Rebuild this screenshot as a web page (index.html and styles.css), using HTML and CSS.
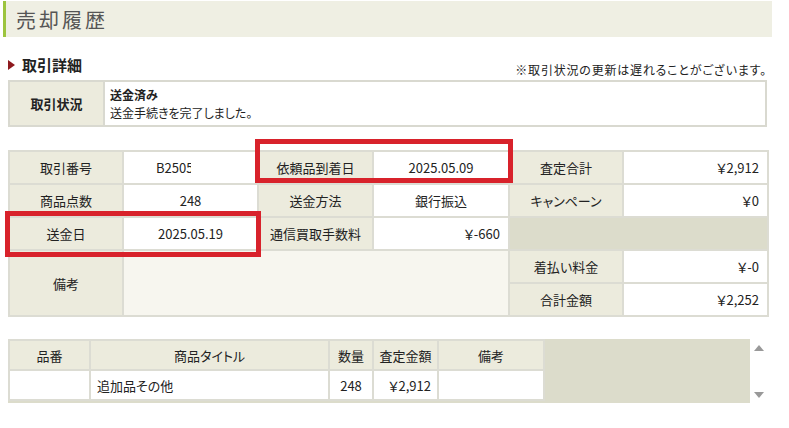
FILE: index.html
```html
<!DOCTYPE html>
<html lang="ja">

<head>
    <meta charset="UTF-8">
    <meta name="viewport" content="width=device-width, initial-scale=1.0">
    <title>売却履歴</title>
    <link rel="stylesheet" href="styles.css">
</head>

<body>
    <div class="page-title">
        <h1>売却履歴</h1>
    </div>

    <div class="main">
        <div class="detail-head">
            <h2 class="section-header"><span class="mark"></span>取引詳細</h2>
            <p class="note">※取引状況の更新は遅れることがございます。</p>
        </div>

        <!-- Status -->
        <table class="status-table">
            <tr>
                <th>取引状況</th>
                <td>
                    <div class="status-main">送金済み</div>
                    <div class="status-sub">送金手続きを完了しました。</div>
                </td>
            </tr>
        </table>

        <!-- Detail -->
        <div class="detail-wrap">
            <table class="detail-table">
                <colgroup>
                    <col style="width: 114px">
                    <col style="width: 135px">
                    <col style="width: 115px">
                    <col style="width: 136px">
                    <col style="width: 114px">
                    <col style="width: 145px">
                </colgroup>
                <tr>
                    <th>取引番号</th>
                    <td><span class="masked">B25059</span></td>
                    <th>依頼品到着日</th>
                    <td>2025.05.09</td>
                    <th>査定合計</th>
                    <td class="num">￥2,912</td>
                </tr>
                <tr>
                    <th>商品点数</th>
                    <td>248</td>
                    <th>送金方法</th>
                    <td>銀行振込</td>
                    <th>キャンペーン</th>
                    <td class="num">￥0</td>
                </tr>
                <tr>
                    <th>送金日</th>
                    <td>2025.05.19</td>
                    <th>通信買取手数料</th>
                    <td class="num">￥-660</td>
                    <td class="blank" colspan="2"></td>
                </tr>
                <tr>
                    <th rowspan="2">備考</th>
                    <td class="memo" colspan="3" rowspan="2"></td>
                    <th>着払い料金</th>
                    <td class="num">￥-0</td>
                </tr>
                <tr>
                    <th>合計金額</th>
                    <td class="num">￥2,252</td>
                </tr>
            </table>
            <div class="highlight highlight-arrival"></div>
            <div class="highlight highlight-sent"></div>
        </div>

        <!-- Items -->
        <div class="items-box">
            <div class="items-scroll">
                <table class="items-table">
                    <colgroup>
                        <col style="width: 81px">
                        <col style="width: 239px">
                        <col style="width: 44px">
                        <col style="width: 65px">
                        <col style="width: 106px">
                    </colgroup>
                    <tr>
                        <th>品番</th>
                        <th>商品タイトル</th>
                        <th>数量</th>
                        <th>査定金額</th>
                        <th>備考</th>
                    </tr>
                    <tr>
                        <td></td>
                        <td class="title">追加品その他</td>
                        <td>248</td>
                        <td class="num">￥2,912</td>
                        <td></td>
                    </tr>
                </table>
            </div>
            <div class="scrollbar">
                <span class="arrow-up"></span>
                <span class="arrow-down"></span>
            </div>
        </div>
    </div>
</body>

</html>
```

FILE: styles.css
```css
body {
    margin: 0;
    background-color: #fff;
    color: #222;
    font-family: "Noto Sans CJK JP", "Liberation Sans", sans-serif;
    font-size: 13px;
    font-feature-settings: "palt";
    width: 789px;
}

.page-title {
    margin: 1px 17px 0 3px;
    height: 36px;
    background-color: #efefe3;
    border-left: 3px solid #9cc43e;
    display: flex;
    align-items: center;
}

.page-title h1 {
    margin: 0 0 0 10px;
    font-size: 20px;
    font-weight: normal;
    letter-spacing: 3px;
    color: #555;
}

.main {
    margin-left: 8px;
    width: 759px;
}

.detail-head {
    display: flex;
    justify-content: space-between;
    align-items: flex-end;
    height: 24px;
    margin-top: 19px;
}

.section-header {
    margin: 0;
    font-size: 15px;
    line-height: 20px;
    display: flex;
    align-items: center;
    padding-bottom: 5px;
}

.mark {
    width: 0;
    height: 0;
    border-top: 5px solid transparent;
    border-bottom: 5px solid transparent;
    border-left: 7px solid #8e1a1e;
    margin-right: 7px;
}

.note {
    margin: 0 0 2px;
    font-size: 12px;
    line-height: 16px;
    letter-spacing: 0.8px;
}

/* Status table */

.status-table {
    width: 100%;
    border-collapse: collapse;
    border: 2px solid #d9d9d0;
    height: 47px;
}

.status-table th {
    width: 91px;
    background-color: #ecebdd;
    border-right: 2px solid #d9d9d0;
    font-weight: bold;
}

.status-table td {
    padding: 0 5px;
    font-size: 12px;
    line-height: 17.5px;
}

.status-main {
    font-weight: bold;
}

/* Detail table */

.detail-wrap {
    position: relative;
    margin-top: 23px;
}

.detail-table {
    width: 759px;
    table-layout: fixed;
    border-collapse: collapse;
}

.detail-table th,
.detail-table td {
    border: 2px solid #dcdcd3;
    height: 31px;
    padding: 0 6px;
    text-align: center;
    font-weight: normal;
}

.detail-table th {
    background-color: #ecebdd;
}

.detail-table td.num {
    text-align: right;
    padding-right: 8px;
}

.detail-table td.blank {
    background-color: #dcdccb;
}

.detail-table td.memo {
    background-color: #f7f6ef;
}

.masked {
    display: inline-block;
    width: 35px;
    overflow: hidden;
    white-space: nowrap;
    vertical-align: bottom;
    margin-right: 34px;
}

.highlight {
    position: absolute;
    border: 5px solid #d8222b;
    box-sizing: border-box;
}

.highlight-arrival {
    left: 247px;
    top: -11px;
    width: 258px;
    height: 44px;
}

.highlight-sent {
    left: -3px;
    top: 61px;
    width: 256px;
    height: 46px;
}

/* Items */

.items-box {
    display: flex;
    margin-top: 22px;
    height: 64px;
}

.items-scroll {
    flex: 1;
    background-color: #dcdccb;
}

.items-table {
    width: 535px;
    table-layout: fixed;
    border-collapse: collapse;
}

.items-table th,
.items-table td {
    border: 2px solid #dcdcd3;
    height: 28px;
    padding: 0 4px;
    text-align: center;
    font-weight: normal;
}

.items-table th {
    background-color: #ecebdd;
}

.items-table td {
    background-color: #fff;
}

.items-table td.title {
    text-align: left;
    padding-left: 6px;
}

.items-table td.num {
    text-align: right;
    padding-right: 6px;
}

.scrollbar {
    width: 17px;
    display: flex;
    flex-direction: column;
    justify-content: space-between;
    align-items: center;
    padding: 6px 0 5px;
    box-sizing: border-box;
}

.arrow-up {
    border-left: 5px solid transparent;
    border-right: 5px solid transparent;
    border-bottom: 6px solid #999;
}

.arrow-down {
    border-left: 5px solid transparent;
    border-right: 5px solid transparent;
    border-top: 6px solid #999;
}
```
